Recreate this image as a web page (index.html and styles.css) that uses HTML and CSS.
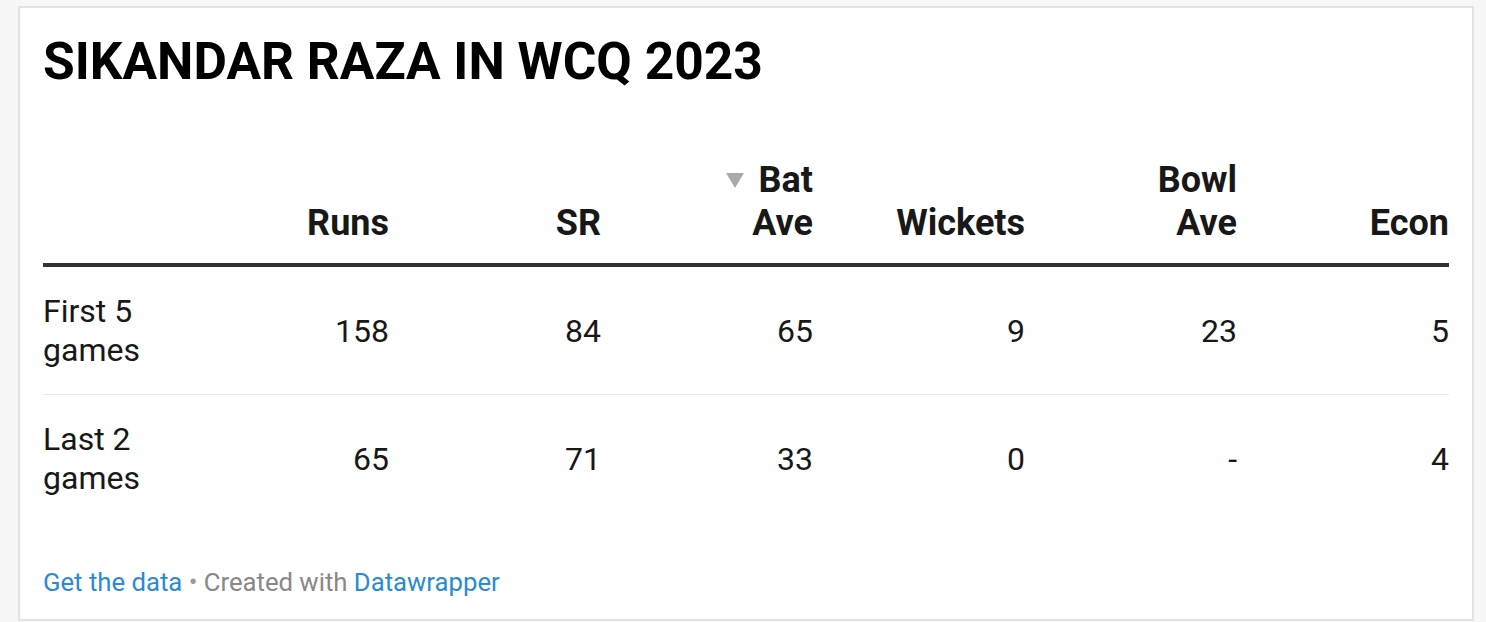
FILE: index.html
```html
<!DOCTYPE html>
<html lang="en">
<head>
<meta charset="utf-8">
<title>Sikandar Raza in WCQ 2023</title>
<link rel="stylesheet" href="styles.css">
</head>
<body>
<div class="page">
  <div class="card">
    <h1 class="title">SIKANDAR RAZA IN WCQ 2023</h1>
    <div class="table">
      <div class="row head">
        <div class="cell first"></div>
        <div class="cell">Runs</div>
        <div class="cell">SR</div>
        <div class="cell sorted"><span class="tri"></span><span>Bat<br>Ave</span></div>
        <div class="cell">Wickets</div>
        <div class="cell">Bowl<br>Ave</div>
        <div class="cell">Econ</div>
      </div>
      <div class="row body sep">
        <div class="cell first">First 5<br>games</div>
        <div class="cell">158</div>
        <div class="cell">84</div>
        <div class="cell">65</div>
        <div class="cell">9</div>
        <div class="cell">23</div>
        <div class="cell">5</div>
      </div>
      <div class="row body">
        <div class="cell first">Last 2<br>games</div>
        <div class="cell">65</div>
        <div class="cell">71</div>
        <div class="cell">33</div>
        <div class="cell">0</div>
        <div class="cell">-</div>
        <div class="cell">4</div>
      </div>
    </div>
    <div class="footer"><a class="link" href="#">Get the data</a> <span class="dot">•</span> Created with <a class="link" href="#">Datawrapper</a></div>
  </div>
</div>
</body>
</html>
```
FILE: styles.css
```css
html, body {
  margin: 0;
  padding: 0;
  background: #f7f7f7;
  font-family: Roboto, "Liberation Sans", Arial, sans-serif;
  color: #181818;
}
.page {
  padding: 6px 0 0 18px;
  height: 616px;
  overflow: hidden;
}
.card {
  box-sizing: border-box;
  width: 1456px;
  background: #fff;
  border: 2px solid #e2e2e2;
  padding: 23px 23px 22px 23px;
}
.title {
  margin: 0;
  font-size: 51.5px;
  line-height: 62px;
  font-weight: 700;
  color: #000;
}
.table {
  margin-top: 66px;
}
.row {
  display: grid;
  grid-template-columns: 134px repeat(6, 1fr);
}
.cell {
  text-align: right;
}
.cell.first {
  text-align: left;
}
.head {
  align-items: end;
  font-size: 36px;
  line-height: 43px;
  font-weight: 700;
  padding-bottom: 18px;
  border-bottom: 4px solid #333;
}
.sorted {
  display: flex;
  justify-content: flex-end;
  align-items: flex-start;
  gap: 8px;
}
.tri {
  width: 0;
  height: 0;
  margin-top: 14px;
  border-left: 9px solid transparent;
  border-right: 9px solid transparent;
  border-top: 15px solid #aaa;
}
.body {
  align-items: center;
  font-size: 32px;
  line-height: 39px;
  padding: 25px 0 24px;
}
.sep {
  border-bottom: 1px solid #eaeaea;
}
.footer {
  margin-top: 45px;
  font-size: 25.7px;
  line-height: 30px;
  color: #888;
}
.link {
  color: #2a8ad2;
  text-decoration: none;
}
.dot {
  color: #999;
}
```
